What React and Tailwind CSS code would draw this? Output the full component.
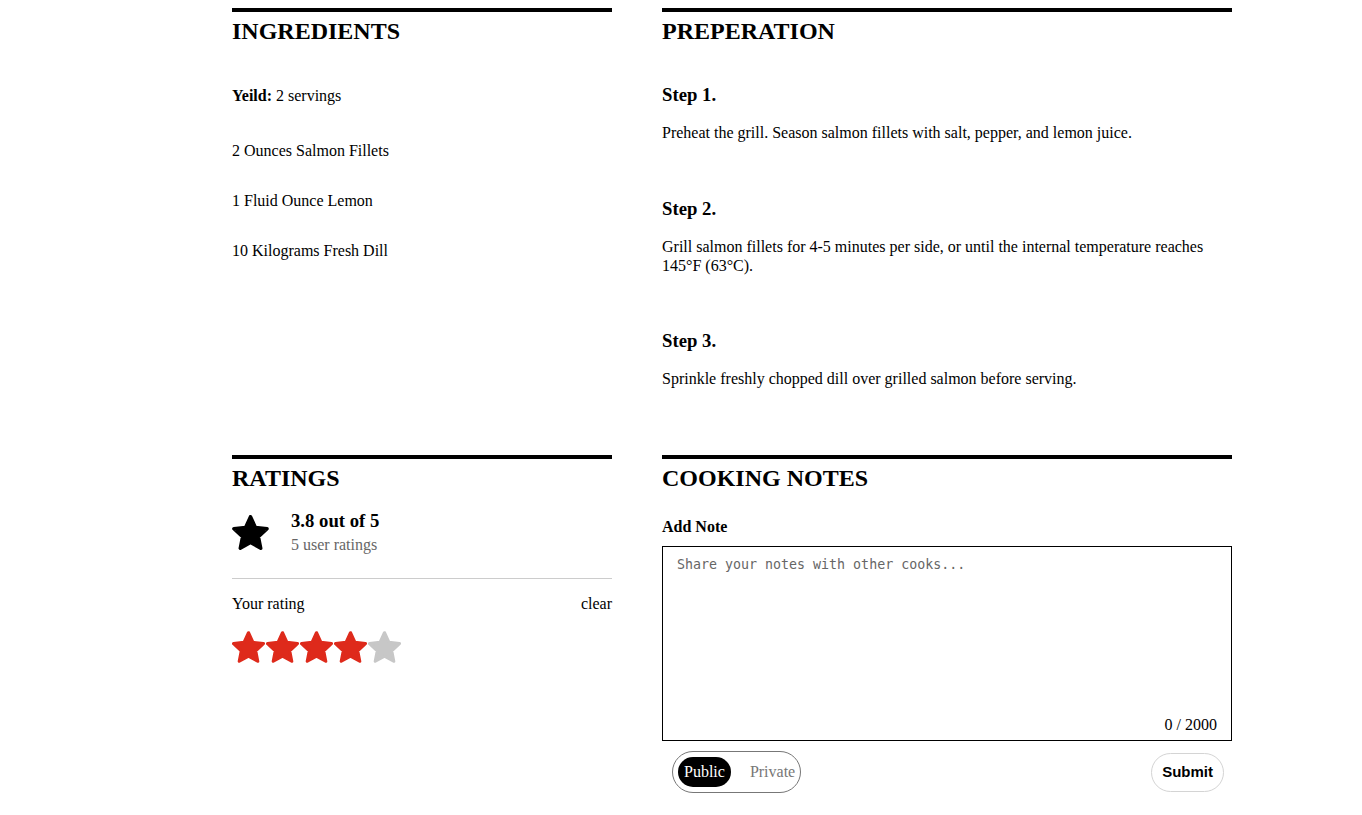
import React, { useState } from "react";

const serif = { fontFamily: '"Liberation Serif", "Times New Roman", serif' };

// Rounded five-point star, cropped tightly to its box
const Star = ({ className }) => (
  <svg
    viewBox="1.5 1.6 21 20.1"
    className={className}
    fill="currentColor"
    stroke="currentColor"
    strokeWidth="2"
    strokeLinejoin="round"
  >
    <path d="M12 2.6L14.82 8.72 21.51 9.51 16.57 14.08 17.88 20.69 12 17.4 6.12 20.69 7.43 14.08 2.49 9.51 9.18 8.72z" />
  </svg>
);

const SectionTitle = ({ children }) => (
  <div className="border-t-4 border-black">
    <h2 className="mt-[5px] text-[24px] font-bold leading-[28px]">{children}</h2>
  </div>
);

const ingredients = [
  "2 Ounces Salmon Fillets",
  "1 Fluid Ounce Lemon",
  "10 Kilograms Fresh Dill",
];

const steps = [
  { text: "Preheat the grill. Season salmon fillets with salt, pepper, and lemon juice.", gap: "" },
  {
    text: "Grill salmon fillets for 4-5 minutes per side, or until the internal temperature reaches 145°F (63°C).",
    gap: "mt-[56px]",
  },
  { text: "Sprinkle freshly chopped dill over grilled salmon before serving.", gap: "mt-[55px]" },
];

export default function App() {
  const [rating, setRating] = useState(4);
  const [note, setNote] = useState("");
  const [visibility, setVisibility] = useState("public");

  return (
    <div className="min-h-[815px] bg-white text-[16px] text-black" style={serif}>
      <div className="ml-[232px] grid w-[1000px] grid-cols-[380px_570px] gap-x-[50px] pt-[8px]">
        {/* Ingredients */}
        <section>
          <SectionTitle>INGREDIENTS</SectionTitle>
          <p className="mt-[41px] leading-[19px]">
            <span className="font-bold">Yeild:</span> 2 servings
          </p>
          <ul className="mt-[36px] space-y-[31px] leading-[19px]">
            {ingredients.map((item) => (
              <li key={item}>{item}</li>
            ))}
          </ul>
        </section>

        {/* Preperation */}
        <section className="pb-[67px]">
          <SectionTitle>PREPERATION</SectionTitle>
          <ol className="mt-[39px]">
            {steps.map((step, i) => (
              <li key={i} className={step.gap}>
                <h3 className="text-[18.72px] font-bold leading-[22px]">Step {i + 1}.</h3>
                <p className="mt-[17px] leading-[19px]">{step.text}</p>
              </li>
            ))}
          </ol>
        </section>

        {/* Ratings */}
        <section>
          <SectionTitle>RATINGS</SectionTitle>
          <div className="mt-[18px] flex items-center gap-[22px]">
            <Star className="h-[35px] w-[37px]" />
            <div>
              <p className="text-[18.72px] font-bold leading-[22px]">3.8 out of 5</p>
              <p className="mt-[3px] leading-[19px] text-[#666]">5 user ratings</p>
            </div>
          </div>
          <div className="mt-[24px] border-t border-[#ccc]" />
          <div className="mt-[15px] flex items-center justify-between leading-[19px]">
            <span>Your rating</span>
            <button onClick={() => setRating(0)}>clear</button>
          </div>
          <div className="mt-[18px] flex">
            {[1, 2, 3, 4, 5].map((n) => (
              <button key={n} onClick={() => setRating(n)} className="block w-[34px]">
                <Star
                  className={`h-[32px] w-[33px] ${n <= rating ? "text-[#de2a1b]" : "text-[#c7c7c7]"}`}
                />
              </button>
            ))}
          </div>
        </section>

        {/* Cooking notes */}
        <section>
          <SectionTitle>COOKING NOTES</SectionTitle>
          <p className="mt-[25px] font-bold leading-[19px]">Add Note</p>
          <div className="relative mt-[10px] h-[195px] border border-black">
            <textarea
              value={note}
              maxLength={2000}
              onChange={(e) => setNote(e.target.value)}
              placeholder="Share your notes with other cooks..."
              className="h-full w-full resize-none px-[14px] py-[9px] text-[13.3px] leading-[18px] outline-none placeholder:text-[#666]"
              style={{ fontFamily: '"DejaVu Sans Mono", monospace' }}
            />
            <span className="absolute bottom-[6px] right-[14px] leading-[19px]">
              {note.length} / 2000
            </span>
          </div>
          <div className="mt-[10px] flex items-center justify-between pl-[10px] pr-[8px]">
            <div className="flex h-[42px] items-center rounded-full border border-[#777] pl-[5px] pr-[0px]">
              <button
                onClick={() => setVisibility("public")}
                className={`h-[30px] rounded-full px-[6px] ${visibility === "public" ? "bg-black text-white" : "text-[#777]"}`}
              >
                Public
              </button>
              <button
                onClick={() => setVisibility("private")}
                className={`ml-[14px] h-[30px] rounded-full px-[5px] ${visibility === "private" ? "bg-black text-white" : "text-[#777]"}`}
              >
                Private
              </button>
            </div>
            <button
              className="h-[39px] rounded-full border border-[#d4d4d4] px-[10px] text-[15px] font-bold"
              style={{ fontFamily: '"Liberation Sans", Arial, sans-serif' }}
            >
              Submit
            </button>
          </div>
        </section>
      </div>
    </div>
  );
}
